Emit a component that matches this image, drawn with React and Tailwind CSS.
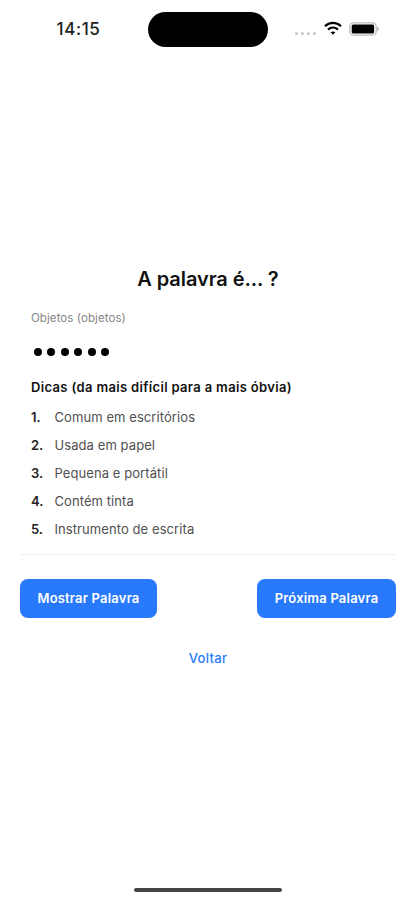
const hints = [
  "Comum em escritórios",
  "Usada em papel",
  "Pequena e portátil",
  "Contém tinta",
  "Instrumento de escrita",
];

const word = "caneta";

function StatusBar() {
  return (
    <header className="grid h-[58px] shrink-0 grid-cols-[148px_120px_1fr] items-center">
      <span className="pl-[56.500px] text-[17px] leading-none font-medium tracking-[0.600px] text-[#222]">
        14:15
      </span>
      <div className="h-[35px] rounded-full bg-black" />
      <div className="flex items-center pl-[27px]">
        <div className="mt-2 flex gap-[3px]">
          {[0, 1, 2, 3].map((i) => (
            <span key={i} className="h-[3px] w-[3px] rounded-full bg-[#c4c4c4]" />
          ))}
        </div>
        <svg className="-mt-[2px] ml-[8px] h-[14px] w-[18px]" viewBox="0 0 18 14" fill="none" stroke="#000" strokeWidth="2.2">
          <path d="M1 5.200C5.600.7 12.400.7 17 5.200" />
          <path d="M4 8.600c2.900-2.800 7.100-2.800 10 0" />
          <path d="M9 13.800 6.700 11.300c1.300-1.200 3.300-1.200 4.600 0z" fill="#000" stroke="none" />
        </svg>
        <svg className="-mt-px ml-[7px] h-[14px] w-[31px]" viewBox="0 0 31 14" fill="none">
          <rect x=".8" y=".8" width="26.400" height="12.400" rx="3.800" stroke="#bdbdbd" strokeWidth="1.300" />
          <rect x="2.700" y="2.600" width="22.400" height="8.800" rx="1.500" fill="#000" />
          <path d="M28.500 5v4c1.600-.6 1.600-3.400 0-4z" fill="#b5b5b5" stroke="#b5b5b5" strokeWidth=".5" />
        </svg>
      </div>
    </header>
  );
}

function Button({ children, className }) {
  return (
    <button
      className={`h-[39px] rounded-lg bg-[#2879fc] text-[13px] font-semibold tracking-[0.200px] text-white ${className}`}
    >
      {children}
    </button>
  );
}

export default function App() {
  return (
    <div className="flex h-[900px] w-[415px] flex-col overflow-hidden bg-white font-['Inter','Liberation_Sans',sans-serif] text-[#111]">
      <StatusBar />

      <main className="mt-[207px] flex flex-col pr-[19px] pl-5">
        <h1 className="text-center text-[20px] leading-7 font-semibold tracking-[-0.080px]">A palavra é... ?</h1>

        <section className="border-b border-[#f0f0f0] px-[11px] pb-[10px]">
          <p className="mt-4 text-[11.500px] leading-[18px] tracking-[0.080px] text-[#858585]">Objetos (objetos)</p>
          <div className="mt-[21px] ml-[3px] flex h-2 gap-[5.400px]">
            {word.split("").map((letter, i) => (
              <span key={i} className="h-2 w-2 rounded-full bg-black" />
            ))}
          </div>
          <h2 className="mt-[21px] text-[13px] leading-5 font-semibold tracking-[0.340px]">
            Dicas (da mais difícil para a mais óbvia)
          </h2>
          <ol className="mt-[7px]">
            {hints.map((hint, i) => (
              <li key={hint} className="flex h-7 items-center text-[13px]">
                <span className="w-[23.500px] font-semibold text-[#222]">{i + 1}.</span>
                <span className="tracking-[0.080px] text-[#505050]">{hint}</span>
              </li>
            ))}
          </ol>
        </section>

        <div className="mt-[24px] flex justify-between">
          <Button className="w-[137px]">Mostrar Palavra</Button>
          <Button className="w-[139px]">Próxima Palavra</Button>
        </div>

        <button className="mt-[30px] self-center text-[13px] leading-5 font-medium tracking-[0.300px] text-[#2879fc]">
          Voltar
        </button>
      </main>

      <div className="mt-auto mb-2 h-[4px] w-[148px] shrink-0 self-center rounded-full bg-[#444]" />
    </div>
  );
}
